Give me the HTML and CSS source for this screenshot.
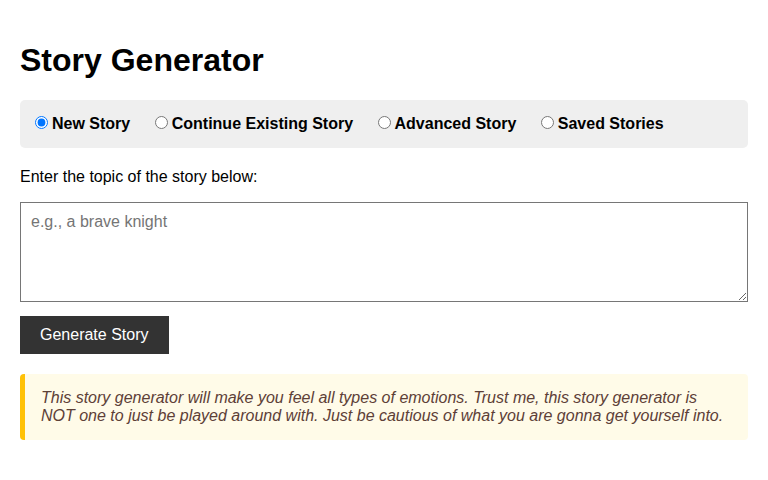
FILE: index.html
```html
<html>
<head>
<title>Story Generator</title>
<link rel="stylesheet" href="styles.css">
</head>
<body>

    <h1>Story Generator</h1>

    <div class="modes">
        <label><input type="radio" name="mode" value="new" checked>New Story</label>
        <label><input type="radio" name="mode" value="continue">Continue Existing Story</label>
        <label><input type="radio" name="mode" value="advanced">Advanced Story</label>
        <label><input type="radio" name="mode" value="saved">Saved Stories</label>
    </div>

    <div class="prompt">Enter the topic of the story below:</div>
    <textarea id="topic" placeholder="e.g., a brave knight"></textarea>
    <button id="generate">Generate Story</button>

    <div class="note">
        This story generator will make you feel all types of emotions. Trust me, this story generator is
        NOT one to just be played around with. Just be cautious of what you are gonna get yourself into.
    </div>

</body>
</html>
```

FILE: styles.css
```css
body {
    margin: 0;
    padding: 0 20px;
    font-family: "Liberation Sans", Arial, sans-serif;
    font-size: 16px;
    color: #000;
    background: #fff;
}

h1 {
    font-size: 32px;
    margin: 42px 0 21px;
}

/* Mode selector bar */
.modes {
    background: #efefef;
    border-radius: 5px;
    padding: 15px;
    margin-bottom: 20px;
}

.modes label {
    font-weight: bold;
    margin-right: 20px;
}

.modes input {
    margin: 0 4px 0 0;
}

.prompt {
    margin-bottom: 16px;
}

textarea#topic {
    display: block;
    box-sizing: border-box;
    width: 100%;
    height: 100px;
    padding: 10px;
    border: 1px solid #767676;
    font-family: "Liberation Sans", Arial, sans-serif;
    font-size: 16px;
    margin: 0 0 14px;
}

button#generate {
    background: #333;
    color: #fff;
    border: none;
    padding: 10px 20px;
    font-family: "Liberation Sans", Arial, sans-serif;
    font-size: 16px;
}

.note {
    margin-top: 20px;
    padding: 15px 16px;
    background: #fffbe8;
    border-left: 5px solid #ffc107;
    border-radius: 4px;
    color: #5d4037;
    font-style: italic;
}
```
